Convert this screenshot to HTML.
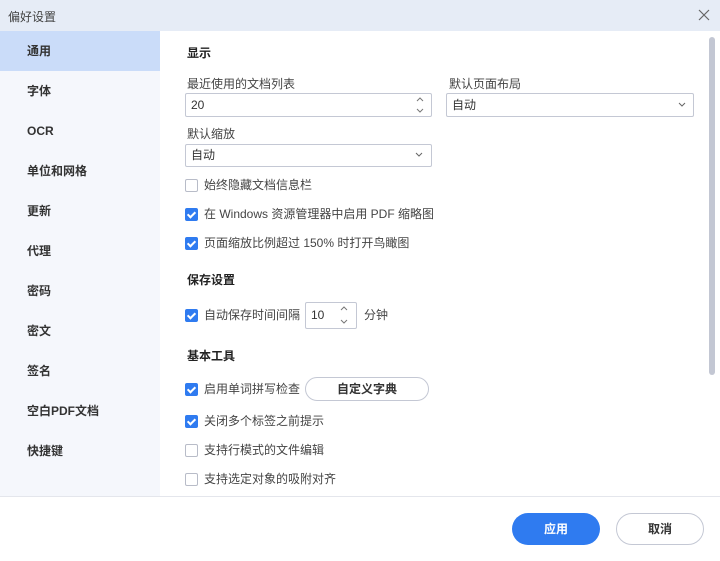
<!DOCTYPE html><html><head><meta charset="utf-8"><style>
*{box-sizing:border-box;margin:0;padding:0}
body{width:720px;height:561px;overflow:hidden;background:#fff;font-family:"Liberation Sans","Noto Sans CJK SC",sans-serif;font-size:12px;color:#333;position:relative}
.a{position:absolute}
.title{left:0;top:0;width:720px;height:31px;background:#e6ecf6}
.side{left:0;top:31px;width:160px;height:466px;background:#f5f7fc}
.si{position:absolute;left:0;width:160px;height:40px;line-height:40px;padding-left:27px;font-weight:bold;font-size:12px;color:#333}
.h{font-weight:bold;font-size:12px;color:#222}
.lbl{font-size:12px;color:#444}
.box{border:1px solid #c4c8d4;border-radius:2px;background:#fff;padding-left:5px;font-size:12px;color:#333}
.cb{position:absolute;left:185px;width:13px;height:13px;border-radius:2px}
.off{border:1px solid #b8bcc8;background:#fff}
.on{background:#2f7bf0}
.on::after{content:"";position:absolute;left:4px;top:2px;width:3px;height:6px;border:solid #fff;border-width:0 2px 2px 0;transform:rotate(45deg)}
.ct{position:absolute;left:204px;font-size:12px;color:#444;line-height:14px}
</style></head><body>
<div class="a title"></div>
<div class="a" style="left:8px;top:8px;font-size:12px;color:#444">偏好设置</div>
<svg class="a" style="left:698px;top:9px" width="12" height="12"><path d="M1 1L11 11M11 1L1 11" stroke="#666" stroke-width="1.2"/></svg>
<div class="a side">
<div class="si" style="top:0;background:#cadcf9">通用</div>
<div class="si" style="top:40px">字体</div>
<div class="si" style="top:80px">OCR</div>
<div class="si" style="top:120px">单位和网格</div>
<div class="si" style="top:160px">更新</div>
<div class="si" style="top:200px">代理</div>
<div class="si" style="top:240px">密码</div>
<div class="si" style="top:280px">密文</div>
<div class="si" style="top:320px">签名</div>
<div class="si" style="top:360px">空白PDF文档</div>
<div class="si" style="top:400px">快捷键</div>
</div>
<div class="a" style="left:709px;top:37px;width:6px;height:338px;background:#c3c7d3;border-radius:3px"></div>
<div class="a h" style="left:187px;top:44px">显示</div>
<div class="a lbl" style="left:187px;top:75px">最近使用的文档列表</div>
<div class="a lbl" style="left:449px;top:75px">默认页面布局</div>
<div class="a box" style="left:185px;top:93px;width:247px;height:24px;line-height:22px">20</div>
<svg class="a" style="left:415px;top:96px" width="10" height="18"><path d="M2 5L5 2L8 5M2 13L5 16L8 13" fill="none" stroke="#777" stroke-width="1"/></svg>
<div class="a box" style="left:446px;top:93px;width:248px;height:24px;line-height:22px">自动</div>
<svg class="a" style="left:678px;top:102px" width="8" height="5"><path d="M1 1L4 4L7 1" fill="none" stroke="#666"/></svg>
<div class="a lbl" style="left:187px;top:125px">默认缩放</div>
<div class="a box" style="left:185px;top:144px;width:247px;height:23px;line-height:21px">自动</div>
<svg class="a" style="left:415px;top:152px" width="8" height="5"><path d="M1 1L4 4L7 1" fill="none" stroke="#666"/></svg>
<div class="cb off" style="top:179px"></div><div class="ct" style="top:178px">始终隐藏文档信息栏</div>
<div class="cb on" style="top:208px"></div><div class="ct" style="top:207px">在 Windows 资源管理器中启用 PDF 缩略图</div>
<div class="cb on" style="top:237px"></div><div class="ct" style="top:236px">页面缩放比例超过 150% 时打开鸟瞰图</div>
<div class="a h" style="left:187px;top:271px">保存设置</div>
<div class="cb on" style="top:309px"></div><div class="ct" style="top:308px">自动保存时间间隔</div>
<div class="a box" style="left:305px;top:302px;width:52px;height:27px;line-height:25px">10</div>
<svg class="a" style="left:339px;top:305px" width="10" height="20"><path d="M2 5L5 2L8 5M2 15L5 18L8 15" fill="none" stroke="#777" stroke-width="1"/></svg>
<div class="ct" style="left:364px;top:308px">分钟</div>
<div class="a h" style="left:187px;top:347px">基本工具</div>
<div class="cb on" style="top:383px"></div><div class="ct" style="top:382px">启用单词拼写检查</div>
<div class="a" style="left:305px;top:377px;width:124px;height:24px;border:1px solid #c4c8d4;border-radius:12px;text-align:center;line-height:22px;font-weight:bold;color:#333">自定义字典</div>
<div class="cb on" style="top:415px"></div><div class="ct" style="top:414px">关闭多个标签之前提示</div>
<div class="cb off" style="top:444px"></div><div class="ct" style="top:443px">支持行模式的文件编辑</div>
<div class="cb off" style="top:473px"></div><div class="ct" style="top:472px">支持选定对象的吸附对齐</div>
<div class="a" style="left:0;top:496px;width:720px;height:1px;background:#e4e6ec"></div>
<div class="a" style="left:512px;top:513px;width:88px;height:32px;border-radius:16px;background:#2f7bf0;color:#fff;font-weight:bold;text-align:center;line-height:32px">应用</div>
<div class="a" style="left:616px;top:513px;width:88px;height:32px;border-radius:16px;border:1px solid #c4c8d4;color:#333;font-weight:bold;text-align:center;line-height:30px">取消</div>
</body></html>
